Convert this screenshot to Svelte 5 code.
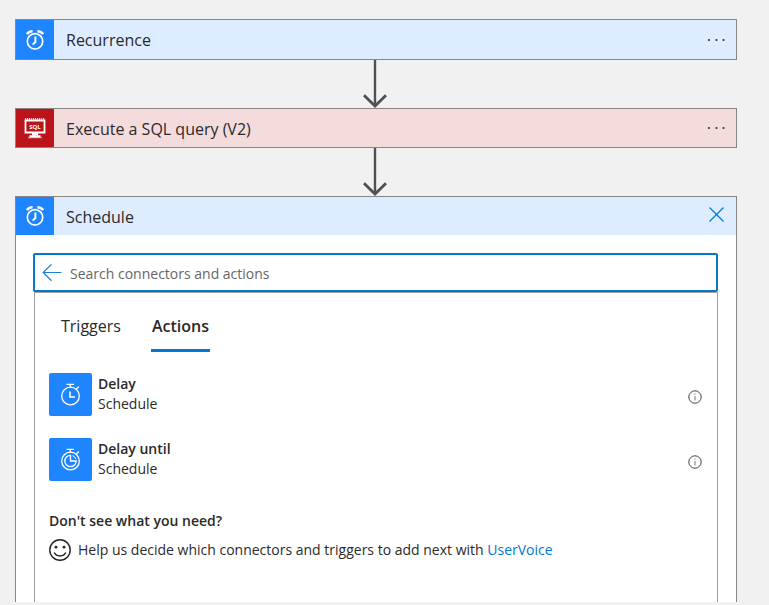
<script>
  let query = $state('');
  let tab = $state('Actions');
  const tabs = ['Triggers', 'Actions'];
  const steps = [
    { title: 'Recurrence', kind: 'clock' },
    { title: 'Execute a SQL query (V2)', kind: 'sql' }
  ];
  const actions = [
    { name: 'Delay', group: 'Schedule', until: false },
    { name: 'Delay until', group: 'Schedule', until: true }
  ];
</script>

{#snippet alarm()}
  <svg width="20" height="22" viewBox="0 0 20 22" fill="none" stroke="#fff" aria-hidden="true">
    <circle cx="10" cy="12.3" r="7.7" stroke-width="1.7" />
    <path d="M10.400 7.500v5.500l-2.800 2.600" stroke-width="1.900" />
    <path d="M2 5.200C3 3.400 5 2.300 7.600 2.300M18 5.200C17 3.400 15 2.300 12.400 2.300" stroke-width="2.400" />
  </svg>
{/snippet}

{#snippet database()}
  <svg width="22" height="21" viewBox="0 0 22 21" aria-hidden="true">
    <path d="M1.500 2.500h19v12h-19z" fill="none" stroke="#fff" stroke-width="1.800" />
    <path d="M1 1h20" stroke="#fff" stroke-width="1.500" stroke-dasharray="1.200 .8" />
    <path d="M8 15h6v2.500H8z" fill="#fff" />
    <path d="M5.500 17.200h11v2.200h-11z" fill="#fff" />
    <path d="M4.500 19.500h13" stroke="#fff" stroke-width="1.400" stroke-dasharray="1.200 .8" />
    <text x="11" y="10.700" text-anchor="middle" class="sql-label">SQL</text>
  </svg>
{/snippet}

{#snippet connector()}
  <div class="connector">
    <svg width="26" height="48" viewBox="0 0 26 48" fill="none" stroke="#4f5052" aria-hidden="true">
      <path d="M13 0v46" stroke-width="2.400" />
      <path d="M2 35.200l11 10.800 11-10.800" stroke-width="2.800" />
    </svg>
  </div>
{/snippet}

<main>
  {#each steps as step}
    <section class="card step {step.kind}">
      <span class="tile">
        {#if step.kind === 'clock'}{@render alarm()}{:else}{@render database()}{/if}
      </span>
      <h2>{step.title}</h2>
      <button class="tool" aria-label="More options for {step.title}">
        <svg width="18" height="4" viewBox="0 0 18 4" fill="#333" aria-hidden="true">
          <circle cx="2" cy="2" r="1.100" /><circle cx="9.500" cy="2" r="1.100" /><circle cx="16.500" cy="2" r="1.100" />
        </svg>
      </button>
    </section>
    {@render connector()}
  {/each}

  <section class="card picker">
    <header class="step clock">
      <span class="tile">{@render alarm()}</span>
      <h2>Schedule</h2>
      <button class="tool close" aria-label="Close">
        <svg width="16" height="16" viewBox="0 0 16 16" stroke="#0078d4" stroke-width="1.200" aria-hidden="true">
          <path d="M1.500 1.500l14 14M15.500 1.500l-14 14" />
        </svg>
      </button>
    </header>

    <div class="body">
      <div class="search">
        <button class="back" aria-label="Back">
          <svg width="20" height="18" viewBox="0 0 20 18" fill="none" stroke="#1a80e0" stroke-width="1.200" aria-hidden="true">
            <path d="M19.500 8.500H1.200M9.500 .3L1.200 8.500l8.300 8.200" />
          </svg>
        </button>
        <input type="text" aria-label="Search connectors and actions" placeholder="Search connectors and actions" bind:value={query} />
      </div>

      <div class="results">
        <div class="tabs" role="tablist">
          {#each tabs as name}
            <button role="tab" aria-selected={tab === name} onclick={() => (tab = name)}>{name}</button>
          {/each}
        </div>

        <ul>
          {#each actions as action}
            <li>
              <button class="action">
                <span class="thumb">
                  <svg width="21" height="23" viewBox="0 0 21 23" fill="none" stroke="#fff" stroke-width="1.300" aria-hidden="true">
                    <circle cx="10.500" cy="13" r="8.800" />
                    <path d="M6.500 1.300h7.500M10.300 1.300v3M16.500 6l2.300-2.500" />
                    {#if action.until}
                      <path d="M10.500 7.300a5.700 5.700 0 1 0 5.700 5.700h-5.700z" />
                      <path d="M12.500 7.600a5.700 5.700 0 0 1 3.400 3.400" stroke-width="1" />
                    {:else}
                      <path d="M10 8.500v5.500h5" stroke-width="1.500" />
                    {/if}
                  </svg>
                </span>
                <span class="words"><strong>{action.name}</strong><span>{action.group}</span></span>
              </button>
              <button class="info" aria-label="About {action.name}">
                <svg width="14" height="14" viewBox="0 0 14 14" fill="none" stroke="#444" aria-hidden="true">
                  <circle cx="7" cy="7" r="6.200" />
                  <path d="M7 6v4.500M7 3.500v1.200" stroke="#777" />
                </svg>
              </button>
            </li>
          {/each}
        </ul>

        <h3>Don't see what you need?</h3>
        <p>
          <svg width="22" height="22" viewBox="0 0 22 22" fill="none" stroke="#222" stroke-width="1.400" aria-hidden="true">
            <circle cx="11" cy="11" r="10.200" />
            <path d="M5.200 13.500c2.300 4.600 9.300 4.600 11.600 0" />
            <circle cx="7" cy="8.200" r="1.400" fill="#222" stroke="none" />
            <circle cx="15" cy="8.200" r="1.400" fill="#222" stroke="none" />
          </svg>
          <span>Help us decide which connectors and triggers to add next with <a href="#uservoice">UserVoice</a></span>
        </p>
      </div>
    </div>
  </section>
</main>

<style>
  :global(body) {
    background: #f1f1f1;
  }
  main {
    padding: 19px 32px 3px 15px;
    font-family: 'Open Sans', 'Noto Sans', sans-serif;
    font-size: 14px;
    color: #2a2a2a;
  }
  button {
    border: 0;
    padding: 0;
    background: none;
    font: inherit;
    color: inherit;
    cursor: pointer;
  }
  svg {
    display: block;
    flex: none;
  }
  h2, h3, p, ul {
    margin: 0;
    padding: 0;
  }
  .card {
    border: 1px solid #8a8688;
  }
  .step {
    display: flex;
    align-items: stretch;
    height: 38px;
    background: #deecff;
  }
  .step.sql {
    background: #f4dcdd;
  }
  .card.clock {
    height: 39px;
  }
  .tile {
    width: 38px;
    display: grid;
    place-items: center;
    background: #1f85ff;
  }
  .sql .tile {
    background: #ba141a;
  }
  .sql-label {
    font: bold 6px 'Open Sans', sans-serif;
    fill: #fff;
  }
  h2, .tabs {
    font-size: 16px;
    line-height: 24px;
  }
  h2 {
    flex: 1;
    padding: 8px 0 0 12px;
    font-weight: 400;
  }
  .tool {
    width: 40px;
    display: grid;
    place-items: center;
  }
  .close {
    padding-bottom: 4px;
  }
  .connector {
    display: flex;
    justify-content: center;
    padding-right: 2px;
  }
  .picker {
    border-bottom: 0;
    background: #fff;
  }
  .body {
    padding: 18px 18px 0 17px;
  }
  .search {
    display: flex;
    align-items: center;
    height: 35px;
    border: 2px solid #0078d4;
    border-radius: 2px;
    background: #fff;
  }
  .back {
    margin-left: 7px;
  }
  input {
    flex: 1;
    min-width: 0;
    height: 32px;
    border: 0;
    outline: 0;
    padding: 2px 8px 0;
    background: none;
    font: inherit;
    color: inherit;
  }
  input::placeholder {
    color: #666;
    opacity: 1;
  }
  .results {
    margin-left: 1px;
    border: 1px solid #a0a0a0;
    border-bottom: 0;
    padding: 16px 14px 41px;
  }
  .tabs {
    display: flex;
    gap: 29px;
    padding-left: 11px;
  }
  .tabs button {
    height: 43px;
    border-bottom: 3px solid transparent;
    padding: 0 1px 6px;
  }
  .tabs button[aria-selected='true'] {
    border-color: #0078d4;
    font-weight: 600;
  }
  ul {
    display: grid;
    gap: 22px;
    padding-top: 21px;
    list-style: none;
  }
  li, .action {
    display: flex;
    align-items: center;
  }
  .action {
    flex: 1;
    gap: 6px;
    text-align: left;
    line-height: 20px;
  }
  .thumb {
    width: 43px;
    height: 43px;
    display: grid;
    place-items: center;
    border-radius: 2px;
    background: #1f85ff;
  }
  .words {
    display: grid;
    padding-bottom: 2px;
  }
  strong, h3 {
    font-weight: 600;
  }
  .info {
    padding: 4px 1px 0;
  }
  h3 {
    margin-top: 30px;
    font-size: 14px;
    line-height: 20px;
  }
  p {
    display: flex;
    align-items: center;
    gap: 7px;
    padding-top: 8px;
    line-height: 22px;
  }
  a {
    color: #0078d4;
    text-decoration: none;
  }
</style>
